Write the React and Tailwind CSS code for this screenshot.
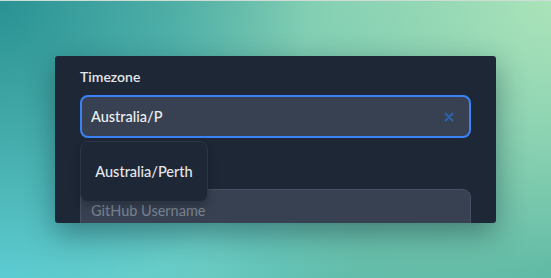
function ClearIcon() {
  return (
    <svg width="10" height="10" viewBox="0 0 10 10" className="text-[#2f62b0]">
      <path d="M1.5 1.5L8.5 8.5M8.5 1.5L1.5 8.5" stroke="currentColor" strokeWidth="2" strokeLinecap="round" />
    </svg>
  );
}

export default function App() {
  return (
    <div
      className="h-[278px] w-[551px] overflow-hidden border-t border-[#cfdcd6] bg-[#6cc3b0] bg-[image:radial-gradient(circle_at_0%_0%,#2a9294_0%,transparent_50%),radial-gradient(circle_at_100%_0%,#aae3b9_0%,transparent_62%),radial-gradient(circle_at_0%_100%,#62d3da_0%,transparent_58%),radial-gradient(circle_at_100%_100%,#42a99d_0%,transparent_55%)] pl-[55px] pt-[55px]"
      style={{ fontFamily: "Lato, 'Open Sans', sans-serif" }}
    >
      <div className="relative h-[167px] w-[441px] overflow-hidden rounded-[3px] bg-[#1e2736] px-[25px] pt-[11px] shadow-[0_10px_30px_rgba(10,40,50,0.45)]">
        <label className="block text-[14px] font-semibold leading-5 text-[#e4e7eb]">Timezone</label>

        <div className="mt-2 flex h-[43px] items-center justify-between rounded-lg border-2 border-[#3b82f6] bg-[#374151] pl-[9px] pr-[15px]">
          <span className="text-[14.5px] font-medium text-[#eef0f3]">Australia/P</span>
          <ClearIcon />
        </div>

        <div className="mt-[51px] flex h-[44px] items-center rounded-lg border border-[#465163] bg-[#374151] px-[10px]">
          <span className="text-[14.5px] text-[#7b8491]">GitHub Username</span>
        </div>

        <div className="absolute left-[25px] top-[85px] flex h-[61px] w-[128px] items-center justify-center rounded-lg border border-[#2b3546] bg-[#1e2736] shadow-[0_4px_10px_rgba(0,0,0,0.25)]">
          <span className="text-[14.5px] font-medium text-[#e6e8ec]">Australia/Perth</span>
        </div>
      </div>
    </div>
  );
}
